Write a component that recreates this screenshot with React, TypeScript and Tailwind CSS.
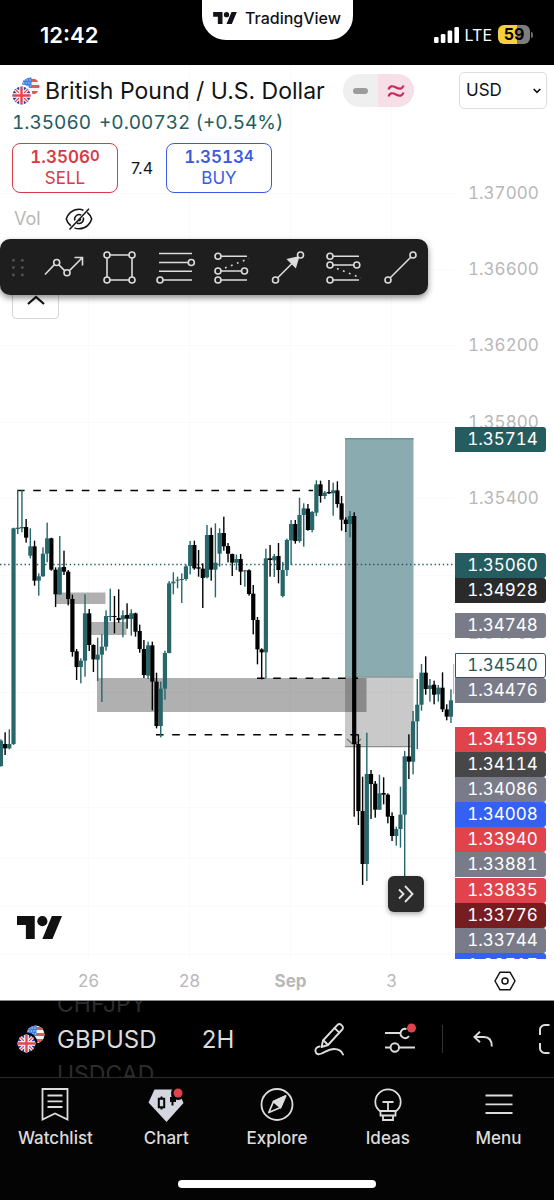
import type { ReactNode } from "react";

type Candle = ["g" | "b", number, number, number, number];

// Each candle: colour, high, low, body top, body bottom (in thirds of a pixel below CHART_BASE).
const CHART_BASE = 470;
const CANDLE_STEP = 4.206;
const candles: Candle[] = [
  ["g", 808, 890, 812, 888], ["b", 787, 855, 822, 835], ["g", 778, 838, 822, 835], ["g", 173, 825, 175, 822],
  ["g", 60, 192, 173, 177], ["g", 60, 187, 171, 175], ["b", 147, 218, 171, 203], ["g", 175, 265, 229, 257],
  ["b", 212, 347, 229, 332], ["g", 310, 377, 319, 332], ["g", 232, 320, 251, 319], ["g", 158, 277, 205, 251],
  ["b", 203, 302, 205, 299], ["b", 292, 411, 299, 373], ["g", 198, 375, 292, 373], ["b", 242, 315, 291, 305],
  ["b", 300, 406, 305, 387], ["b", 374, 560, 387, 546], ["b", 537, 630, 544, 591], ["g", 565, 640, 572, 591],
  ["g", 373, 620, 430, 572], ["b", 417, 543, 430, 525], ["b", 523, 606, 525, 568], ["g", 503, 633, 554, 569],
  ["g", 493, 696, 530, 554], ["g", 421, 542, 438, 530], ["g", 356, 453, 438, 441], ["b", 378, 490, 438, 441],
  ["b", 358, 458, 444, 450], ["g", 421, 502, 436, 448], ["b", 400, 476, 435, 446], ["g", 418, 497, 430, 447],
  ["b", 428, 500, 430, 485], ["b", 464, 548, 483, 537], ["b", 510, 624, 537, 615], ["g", 515, 627, 526, 617],
  ["b", 515, 721, 526, 635], ["b", 608, 775, 635, 768], ["g", 635, 802, 656, 768], ["g", 542, 689, 549, 656],
  ["g", 333, 550, 340, 549], ["g", 307, 373, 335, 340], ["g", 320, 355, 329, 332], ["g", 310, 399, 327, 330],
  ["g", 283, 332, 289, 327], ["g", 213, 313, 225, 288], ["b", 212, 299, 225, 295], ["b", 240, 320, 292, 296],
  ["b", 280, 414, 296, 324], ["g", 165, 325, 195, 322], ["b", 173, 332, 195, 299], ["g", 160, 382, 278, 299],
  ["g", 175, 290, 189, 251], ["b", 140, 242, 189, 229], ["b", 219, 277, 228, 251], ["b", 251, 318, 252, 278],
  ["g", 254, 300, 267, 278], ["b", 252, 345, 267, 305], ["g", 300, 350, 301, 304], ["b", 298, 377, 301, 372],
  ["b", 345, 493, 371, 450], ["b", 441, 583, 450, 538], ["b", 535, 628, 538, 547], ["g", 236, 626, 265, 547],
  ["b", 225, 320, 265, 270], ["g", 252, 321, 259, 271], ["b", 219, 340, 258, 300], ["g", 276, 382, 300, 378],
  ["g", 206, 318, 210, 300], ["g", 150, 285, 162, 211], ["b", 150, 221, 162, 213], ["g", 83, 218, 135, 213],
  ["g", 100, 230, 115, 135], ["b", 102, 182, 116, 180], ["g", 123, 187, 126, 180], ["g", 31, 138, 43, 128],
  ["b", 32, 98, 43, 78], ["g", 63, 87, 68, 78], ["b", 30, 72, 66, 70], ["g", 38, 137, 61, 70],
  ["b", 34, 113, 61, 102], ["b", 78, 182, 100, 149], ["b", 142, 186, 149, 162], ["g", 123, 202, 138, 162],
  ["b", 127, 1040, 138, 822], ["b", 793, 1065, 822, 1023], ["b", 920, 1245, 1023, 1182], ["g", 788, 1233, 912, 1182],
  ["b", 900, 1047, 912, 942], ["b", 933, 1043, 941, 1019], ["g", 914, 1020, 970, 1019], ["b", 922, 1003, 969, 974],
  ["b", 970, 1060, 974, 1040], ["b", 1027, 1113, 1038, 1098], ["g", 1070, 1127, 1077, 1098], ["g", 950, 1133, 1034, 1077],
  ["g", 843, 1230, 859, 1034], ["b", 793, 927, 859, 875], ["g", 723, 913, 754, 875], ["g", 627, 837, 704, 754],
  ["g", 582, 722, 608, 704], ["b", 559, 674, 608, 657], ["g", 627, 695, 646, 657], ["b", 632, 703, 644, 674],
  ["g", 645, 695, 653, 673], ["b", 607, 726, 653, 718], ["b", 703, 751, 718, 740], ["g", 658, 759, 691, 740],
];

const CHART_TOP = 65;

const ticks = [
  { price: "1.37000", y: 193 },
  { price: "1.36600", y: 269 },
  { price: "1.36200", y: 345 },
  { price: "1.35800", y: 422 },
  { price: "1.35400", y: 498 },
  { price: "1.34700", y: 633 },
];

const tags = [
  { price: "1.35714", y: 439, tone: "bg-[#245c60] text-white" },
  { price: "1.35060", y: 565, tone: "bg-[#245c60] text-white" },
  { price: "1.34928", y: 590, tone: "bg-[#2a2a2a] text-white" },
  { price: "1.34748", y: 625, tone: "bg-[#797b88] text-white" },
  { price: "1.34540", y: 665, tone: "border border-[#245c60] bg-white text-[#245c60]" },
  { price: "1.34476", y: 690, tone: "bg-[#797b88] text-white" },
  { price: "1.34159", y: 739, tone: "bg-[#e0434c] text-white" },
  { price: "1.34114", y: 764, tone: "bg-[#474747] text-white" },
  { price: "1.34086", y: 789, tone: "bg-[#797b88] text-white" },
  { price: "1.34008", y: 814, tone: "bg-[#3560f4] text-white" },
  { price: "1.33940", y: 839, tone: "bg-[#e0434c] text-white" },
  { price: "1.33881", y: 864, tone: "bg-[#797b88] text-white" },
  { price: "1.33835", y: 890, tone: "bg-[#e0434c] text-white" },
  { price: "1.33776", y: 915, tone: "bg-[#761d22] text-white" },
  { price: "1.33744", y: 940, tone: "bg-[#797b88] text-white" },
  { price: "1.33717", y: 965, tone: "bg-[#3560f4] text-white" },
];

function BrandMark({ className }: { className: string }) {
  return (
    <svg viewBox="0 4 35.5 18" className={className} fill="currentColor" aria-hidden="true">
      <path d="M14 22H7V11H0V4h14v18zM28 22h-8l7.5-18h8L28 22z" />
      <circle cx="20" cy="8" r="4" />
    </svg>
  );
}

function PairFlags({ id, ring }: { id: string; ring: string }) {
  return (
    <svg viewBox="0 0 28 28" className="h-7 w-7 shrink-0" aria-hidden="true">
      <clipPath id={id + "us"}><circle cx="18.5" cy="9.5" r="9" /></clipPath>
      <clipPath id={id + "uk"}><circle cx="9.5" cy="18.5" r="9" /></clipPath>
      <g clipPath={`url(#${id}us)`}>
        <rect width="28" height="28" fill="#f3f3f3" />
        <path d="M9 3.5h19M9 9.5h19M9 15.5h19" stroke="#e0565c" strokeWidth="3" />
        <rect x="9" y="0" width="10.5" height="11" fill="#3f7fe0" />
        <path d="M12 3h7M11 6h8M10 9h9" stroke="#d5e4fb" strokeWidth="1" strokeDasharray="1.3 1.3" />
      </g>
      <circle cx="9.5" cy="18.5" r="11" fill={ring} />
      <g clipPath={`url(#${id}uk)`}>
        <rect y="9" width="19" height="19" fill="#2447a0" />
        <path d="M2 11l15 15M17 11L2 26" stroke="#fff" strokeWidth="3.4" />
        <path d="M2 11l15 15M17 11L2 26" stroke="#e0464c" strokeWidth="1.2" />
        <path d="M9.5 9v19M0 18.5h19" stroke="#fff" strokeWidth="4.6" />
        <path d="M9.5 9v19M0 18.5h19" stroke="#e0464c" strokeWidth="2.4" />
      </g>
    </svg>
  );
}

function StatusBar() {
  return (
    <header className="grid h-[65px] grid-cols-[1fr_151px_1fr] items-start bg-black text-white">
      <div className="flex h-full items-center pt-1 pl-10">
        <span className="text-[22px] leading-6 font-semibold">12:42</span>
      </div>
      <div className="flex h-10 items-center justify-center gap-2 rounded-b-[24px] bg-white pb-1 text-[#111318]">
        <BrandMark className="h-3 w-6" />
        <span className="text-[16px] leading-5 font-medium">TradingView</span>
      </div>
      <div className="flex h-full items-center justify-end gap-[6px] pt-1 pr-[21px]">
        <svg viewBox="0 0 25 16" className="h-4 w-[25px]" fill="#fff" aria-hidden="true">
          <rect x="0" y="10" width="4.6" height="6" rx="1.3" />
          <rect x="6.8" y="7" width="4.6" height="9" rx="1.3" />
          <rect x="13.6" y="3.5" width="4.6" height="12.5" rx="1.3" />
          <rect x="20.4" y="0" width="4.6" height="16" rx="1.3" />
        </svg>
        <span className="text-[16px] leading-6">LTE</span>
        <div className="flex items-center gap-px">
          <span className="h-[19px] w-8 rounded-md bg-[linear-gradient(90deg,#f5cf3e_59%,#7d7d7d_59%)] text-center text-[16px] leading-[19px] font-bold text-black">
            59
          </span>
          <span className="h-[6px] w-[2px] rounded-r-full bg-[#6d6d6d]" />
        </div>
      </div>
    </header>
  );
}

function ChartCanvas() {
  const y = (v: number) => CHART_BASE + v / 3;
  return (
    <svg
      viewBox="0 65 455 894"
      preserveAspectRatio="xMaxYMin slice"
      className="absolute inset-0 h-full w-full"
      role="img"
      aria-label="GBPUSD price chart"
    >
      <g stroke="#fafafa" strokeWidth="1">
        <path d="M88.5 65v894M189.5 65v894M290.5 65v894M391.5 65v894" />
        <path d="M0 193.5h455M0 269.5h455M0 345.5h455M0 422.5h455M0 498.5h455M0 575.5h455M0 633.5h455M0 692.5h455M0 750.5h455M0 807.5h455M0 858.5h455M0 906.5h455M0 954.5h455" />
      </g>
      <g fill="#000" fillOpacity="0.31">
        <rect x="56" y="592.5" width="49.5" height="11.5" />
        <rect x="90" y="622" width="36.5" height="13" />
        <rect x="97" y="678" width="269.5" height="34" />
      </g>
      <rect x="345" y="438" width="68.5" height="239.5" fill="#8aacb0" />
      <rect x="345" y="677.5" width="68.5" height="69.5" fill="#000" fillOpacity="0.21" />
      <path d="M345 438.7h68.5" stroke="#6f9295" strokeWidth="1.4" />
      <path d="M345 677h68.5M345 746.7h68.5" stroke="#8b8f90" strokeWidth="1.2" />
      <path d="M347 739l6 5.500M361 739l-6 5.500" fill="none" stroke="#6f6f6f" strokeWidth="1.3" />
      <path d="M0 564.5h455" stroke="#245c60" strokeWidth="1.3" strokeDasharray="1.4 2.7" />
      <g stroke="#000" strokeWidth="1.5" strokeDasharray="7.6 8.6">
        <path d="M17 490.400h296" />
        <path d="M257 678.200h101" />
        <path d="M156 734.700h202" />
      </g>
      {candles.map(([tone, high, low, top, bottom], i) => {
        const x = 0.9 + i * CANDLE_STEP;
        const fill = tone === "g" ? "#27666a" : "#000";
        return (
          <g key={i} fill={fill}>
            <rect x={x - 0.7} y={y(high)} width="1.4" height={(low - high) / 3} />
            <rect x={x - 2.1} y={y(top)} width="4.2" height={(bottom - top) / 3} />
          </g>
        );
      })}
      <path d="M453.700 664v30" stroke="#27666a" strokeOpacity="0.45" strokeWidth="1" />
    </svg>
  );
}

function QuoteButton({ price, pip, label, tone }: { price: string; pip: string; label: string; tone: string }) {
  return (
    <button type="button" className={`flex h-[50px] w-[106px] flex-col items-center justify-center rounded-lg border bg-white ${tone}`}>
      <span className="flex items-start text-[17px] leading-[21px] font-semibold tabular-nums">
        {price}
        <span className="text-[15px] leading-[18px]">{pip}</span>
      </span>
      <span className="text-[17px] leading-[21px]">{label}</span>
    </button>
  );
}

function Legend() {
  return (
    <div className="relative flex flex-col pt-[9px] pl-3">
      <div className="flex h-[33px] items-center">
        <PairFlags id="top" ring="#ffffff" />
        <h1 className="ml-[5px] text-[23px] leading-7 whitespace-nowrap text-[#131313]">British Pound / U.S. Dollar</h1>
        <div className="ml-[18px] flex h-[33px] w-[71px] shrink-0 overflow-hidden rounded-full">
          <span className="flex flex-1 items-center justify-center bg-[#efefef]">
            <span className="h-[6px] w-[15px] rounded-full bg-[#9c9c9c]" />
          </span>
          <span className="flex flex-1 items-center justify-center bg-[#f7dfe7]">
            <svg viewBox="0 0 18 14" className="h-[14px] w-[18px]" fill="none" stroke="#c9285c" strokeWidth="2.200" aria-hidden="true">
              <path d="M1.500 5.500c1-3.600 3.800-4.100 7.500-2s6.500 1.400 7.500-2M1.500 12.500c1-3.600 3.800-4.100 7.500-2s6.500 1.400 7.500-2" />
            </svg>
          </span>
        </div>
      </div>
      <p className="mt-1 flex gap-2 text-[19px] leading-6 whitespace-nowrap text-[#245c60] tabular-nums">
        <span>1.35060</span>
        <span>+0.00732 (+0.54%)</span>
      </p>
      <div className="mt-2 flex items-center">
        <QuoteButton price="1.3506" pip="0" label="SELL" tone="border-[#d93a45] text-[#d93a45]" />
        <span className="w-12 text-center text-[16px] leading-5 text-[#131313]">7.4</span>
        <QuoteButton price="1.3513" pip="4" label="BUY" tone="border-[#3a5be0] text-[#3a5be0]" />
      </div>
      <div className="mt-3 flex h-7 items-center gap-6 pl-[2px]">
        <span className="text-[18px] leading-6 text-[#b8b8b8]">Vol</span>
        <button type="button" aria-label="Show volume" className="h-[22px] w-7">
          <svg viewBox="0 0 28 22" className="h-[22px] w-7" fill="none" stroke="#131313" strokeWidth="1.500">
            <path d="M18.500 2.300C17.200 1.600 15.700 1.200 14 1.200 7 1.200 2.500 6.500 1.300 11c.6 2.600 2.300 5 4.600 6.900M9.500 19.900c1.400.6 2.900.9 4.500.9 7 0 11.500-5.300 12.700-9.800-.6-2.400-2.200-4.900-4.500-6.700" />
            <path d="M16.200 7.200A4.500 4.500 0 0 0 9.800 12.500M11.900 15A4.500 4.500 0 0 0 18.200 9.500" />
            <path d="M13.500 12.800a2 2 0 0 0 2-2" />
            <path d="M4.500 21.500L24 .8" />
          </svg>
        </button>
      </div>
    </div>
  );
}

function ToolButton({ label, children }: { label: string; children: ReactNode }) {
  return (
    <button type="button" aria-label={label} className="h-14 w-14">
      <svg viewBox="0 0 56 56" className="h-14 w-14" fill="none" stroke="#dcdcdc" strokeWidth="1.600">
        {children}
      </svg>
    </button>
  );
}

function Dot({ x, y }: { x: number; y: number }) {
  return <circle cx={x} cy={y} r="3" fill="#1e1e1e" />;
}

function DrawingToolbar() {
  return (
    <div className="relative z-10 mt-[6px] flex h-14 w-[428px] items-center rounded-[10px] bg-[#1e1e1e] shadow-[0_3px_6px_rgba(0,0,0,0.45)]">
      <svg viewBox="0 0 36 56" className="h-14 w-9" fill="#555" aria-hidden="true">
        <circle cx="13.400" cy="21.300" r="1.400" /><circle cx="22.300" cy="21.300" r="1.400" />
        <circle cx="13.400" cy="28.600" r="1.400" /><circle cx="22.300" cy="28.600" r="1.400" />
        <circle cx="13.400" cy="36" r="1.400" /><circle cx="22.300" cy="36" r="1.400" />
      </svg>
      <ToolButton label="Path">
        <path d="M9 35.500l11.500-12L31 34 46 19M38.500 18.500H46.500V26.500" /><Dot x={20.7} y={23.5} /><Dot x={31} y={33.8} />
      </ToolButton>
      <ToolButton label="Rectangle">
        <path d="M15 16h25v25H15z" /><Dot x={15} y={16} /><Dot x={40} y={16} /><Dot x={15} y={41} /><Dot x={40} y={41} />
      </ToolButton>
      <ToolButton label="Fib retracement">
        <path d="M11 14.500h33M11 23.500h33M11 32.300h33M11 41h33" /><Dot x={43.3} y={23.5} /><Dot x={12} y={41} />
      </ToolButton>
      <ToolButton label="Long position">
        <path d="M14 17.300h29M14 32h27M14 41h29" /><path d="M21 29l24-9.500" strokeDasharray="1.800 4.600" />
        <Dot x={14} y={17.3} /><Dot x={14} y={32} /><Dot x={40.5} y={32} /><Dot x={14} y={41} />
      </ToolButton>
      <ToolButton label="Arrow">
        <path d="M15.500 41L40.500 16" /><path d="M38.500 18l-3 10-7.500-7.500z" fill="#dcdcdc" /><Dot x={15.5} y={41} /><Dot x={40.5} y={16} />
      </ToolButton>
      <ToolButton label="Short position">
        <path d="M14 17.300h29M14 26h27M14 41h29" /><path d="M21 29.500l24 9.500" strokeDasharray="1.800 4.600" />
        <Dot x={14} y={17.3} /><Dot x={14} y={26} /><Dot x={40.8} y={26} /><Dot x={14} y={41} />
      </ToolButton>
      <ToolButton label="Trend line">
        <path d="M16 41L41 16" /><Dot x={16} y={41} /><Dot x={41} y={16} />
      </ToolButton>
    </div>
  );
}

function PriceAxis() {
  return (
    <div className="relative w-[99px] shrink-0 overflow-hidden pt-[7px] pl-1 text-[17px] leading-[25px] tabular-nums">
      <div className="relative h-[37px] w-[88px]">
        <select aria-label="Currency" className="h-full w-full appearance-none rounded-[5px] border border-[#dedede] bg-white pl-[6px] text-[17px] text-[#131313]">
          <option>USD</option>
        </select>
        <svg viewBox="0 0 8 6" className="pointer-events-none absolute top-4 right-[6px] h-[6px] w-2" fill="none" stroke="#131313" strokeWidth="1.700" aria-hidden="true">
          <path d="M.7 1L4 4.300 7.300 1" />
        </svg>
      </div>
      {ticks.map((t) => (
        <span key={t.price} className="absolute left-[13px] text-[#b8b8b8]" style={{ top: t.y - CHART_TOP - 12 }}>
          {t.price}
        </span>
      ))}
      {tags.map((t) => (
        <span
          key={t.price}
          className={`absolute left-0 flex h-[25px] w-[91px] items-center justify-center rounded-r-[3px] pl-1 ${t.tone}`}
          style={{ top: t.y - CHART_TOP - 12 }}
        >
          {t.price}
        </span>
      ))}
    </div>
  );
}

function TimeAxis() {
  return (
    <div className="flex h-[42px] items-center border-b border-[#8a8a8a] bg-white pt-[2px] text-[17px] leading-6 text-[#b8b8b8]">
      <div className="flex flex-1 pl-[38px] text-center">
        <span className="w-[101px]">26</span>
        <span className="w-[101px]">28</span>
        <span className="w-[101px] font-bold">Sep</span>
        <span className="w-[101px]">3</span>
      </div>
      <button type="button" aria-label="Chart settings" className="flex w-[99px] shrink-0 justify-center">
        <svg viewBox="0 0 22 20" className="h-5 w-[22px]" fill="none" stroke="#131313" strokeWidth="1.500">
          <path d="M6 1.200h10L21 10l-5 8.800H6L1 10z" strokeLinejoin="round" />
          <circle cx="11" cy="10" r="3" />
        </svg>
      </button>
    </div>
  );
}

function SymbolBar() {
  return (
    <div className="flex h-[76px] items-center overflow-hidden bg-black text-[#dcdcdc]">
      <button type="button" className="ml-[17px] flex shrink-0 items-center gap-3 text-left">
        <PairFlags id="bar" ring="#000000" />
        <span className="flex w-[104px] flex-col leading-[35px]">
          <span className="text-[23px] text-[#2c2c2c]">CHFJPY</span>
          <span className="text-[24px]">GBPUSD</span>
          <span className="text-[23px] text-[#2c2c2c]">USDCAD</span>
        </span>
      </button>
      <button type="button" className="ml-10 w-[34px] shrink-0 text-[24px] leading-[35px]">2H</button>
      <button type="button" aria-label="Draw" className="ml-[79px] shrink-0">
        <svg viewBox="0 0 32 34" className="h-[34px] w-8" fill="none" stroke="currentColor" strokeWidth="1.900" strokeLinejoin="round" strokeLinecap="round">
          <path d="M9 18.500L23.500 2.800a2.600 2.600 0 0 1 3.700 0l1 1a2.600 2.600 0 0 1 0 3.700L14 23l-6.500 2z" />
          <path d="M9.300 18.300l4.600 4.400M20.500 6l4.800 4.600" />
          <path d="M5.500 24.500C2.500 25 1 27 1.500 29.500s3 3.500 6 2C12 29.500 15 27 20 27c4.500 0 7.500 1.500 9 5.500" />
        </svg>
      </button>
      <button type="button" aria-label="Indicators" className="ml-[38px] shrink-0">
        <svg viewBox="0 0 34 32" className="h-8 w-[34px]" fill="none" stroke="currentColor" strokeWidth="1.900">
          <path d="M1 10h16M1 24.500h5.500M15 24.500h16" />
          <path d="M22.500 6A4.600 4.600 0 1 0 25 13" />
          <circle cx="10.800" cy="24.500" r="4.200" />
          <circle cx="27.500" cy="5" r="4.500" fill="#e0434c" stroke="none" />
        </svg>
      </button>
      <span className="ml-6 h-7 w-px shrink-0 bg-[#333]" />
      <button type="button" aria-label="Undo" className="ml-[30px] shrink-0">
        <svg viewBox="0 0 20 16" className="h-4 w-5" fill="none" stroke="currentColor" strokeWidth="1.900">
          <path d="M7 .8L1.300 6 7 11.200M1.500 6H11c5 0 7.800 3.500 7.800 9.500" />
        </svg>
      </button>
      <button type="button" aria-label="Full screen" className="ml-[46px] shrink-0">
        <svg viewBox="0 0 30 30" className="h-[30px] w-[30px]" fill="none" stroke="currentColor" strokeWidth="2">
          <path d="M1 11V6.500A5 5 0 0 1 6 1h4.500M1 19v4.500A5 5 0 0 0 6 29h4.500M19.500 1H24a5 5 0 0 1 5 5.500V11M29 19v4.500A5 5 0 0 1 24 29h-4.500" />
        </svg>
      </button>
    </div>
  );
}

function Tab({ label, children }: { label: string; children: ReactNode }) {
  return (
    <a href="#" className="flex flex-1 flex-col items-center gap-[6px]">
      <svg viewBox="0 0 36 36" className="h-9 w-9" fill="none" stroke="currentColor" strokeWidth="1.800" aria-hidden="true">
        {children}
      </svg>
      <span className="text-[17px] leading-5 font-medium">{label}</span>
    </a>
  );
}

function TabBar() {
  return (
    <footer className="flex flex-1 flex-col items-center justify-between border-t border-[#2a2a2a] bg-[#040404] pt-2 pb-3 text-[#dcdcdc]">
      <nav className="flex w-full">
        <Tab label="Watchlist">
          <path d="M5.500 3h25v30.500L18 27.500l-12.500 6z" />
          <path d="M10.500 9.500h15M10.500 15.300h15M10.500 21h15" />
        </Tab>
        <Tab label="Chart">
          <path d="M6.500 3.500h23L35.500 17 18.500 36 .5 16.500z" fill="#d5d7e0" stroke="none" />
          <path d="M13.500 10.500v13" stroke="#040404" strokeWidth="2" />
          <path d="M10.800 12.800h5.400v8.400h-5.400z" stroke="#040404" fill="#d5d7e0" strokeWidth="2" />
          <path d="M24.500 9v10.500" stroke="#040404" strokeWidth="2" />
          <path d="M22 11h6v5h-6z" fill="#040404" stroke="none" />
          <circle cx="30" cy="7" r="7" fill="#040404" stroke="none" />
          <circle cx="30" cy="7" r="4.500" fill="#e0434c" stroke="none" />
        </Tab>
        <Tab label="Explore">
          <circle cx="18" cy="18.500" r="15.500" />
          <path d="M26.500 10L14.500 15.500 9.800 26.500 21.500 21.500z" strokeLinejoin="round" />
          <path d="M14.500 15.500l7 6L26.500 10z" fill="currentColor" strokeLinejoin="round" />
        </Tab>
        <Tab label="Ideas">
          <path d="M10.500 25.500C7 23 5.300 20 5.300 16a12.700 12.700 0 0 1 25.400 0c0 4-1.700 7-5.200 9.500" />
          <path d="M10.500 25h15v4.500h-15zM13 29.500h10V34H13zM12.500 16h11M18 16v9" />
        </Tab>
        <Tab label="Menu">
          <path d="M4.500 9.500h27M4.500 18.300h27M4.500 27h27" />
        </Tab>
      </nav>
      <div className="h-2 w-[198px] rounded-full bg-white" />
    </footer>
  );
}

export default function App() {
  return (
    <div className="flex min-h-screen flex-col overflow-hidden bg-black font-['Inter','Liberation_Sans',sans-serif]">
      <StatusBar />
      <main className="flex h-[894px] bg-white">
        <div className="relative min-w-0 flex-1">
          <ChartCanvas />
          <Legend />
          <DrawingToolbar />
          <button type="button" aria-label="Collapse legend" className="relative -mt-2 ml-3 flex h-8 w-[47px] items-end justify-center rounded-[4px] border border-[#d6d6d6] bg-white pb-[13px]">
            <svg viewBox="0 0 18 10" className="h-[10px] w-[18px]" fill="none" stroke="#131313" strokeWidth="2.200">
              <path d="M1 9l8-7 8 7" />
            </svg>
          </button>
          <BrandMark className="absolute bottom-5 left-[17px] h-[23px] w-[45px] text-[#111]" />
          <button type="button" aria-label="Scroll to latest bar" className="absolute right-[31px] bottom-[47px] flex h-9 w-9 items-center justify-center rounded-md bg-[#2b2b2b] shadow-[0_2px_5px_rgba(0,0,0,0.35)]">
            <svg viewBox="0 0 18 18" className="h-[18px] w-[18px]" fill="none" stroke="#e2e2e2" strokeWidth="1.900">
              <path d="M2 4.500L6.500 9 2 13.500M8 1l7.500 8L8 17" />
            </svg>
          </button>
        </div>
        <PriceAxis />
      </main>
      <TimeAxis />
      <SymbolBar />
      <TabBar />
    </div>
  );
}
